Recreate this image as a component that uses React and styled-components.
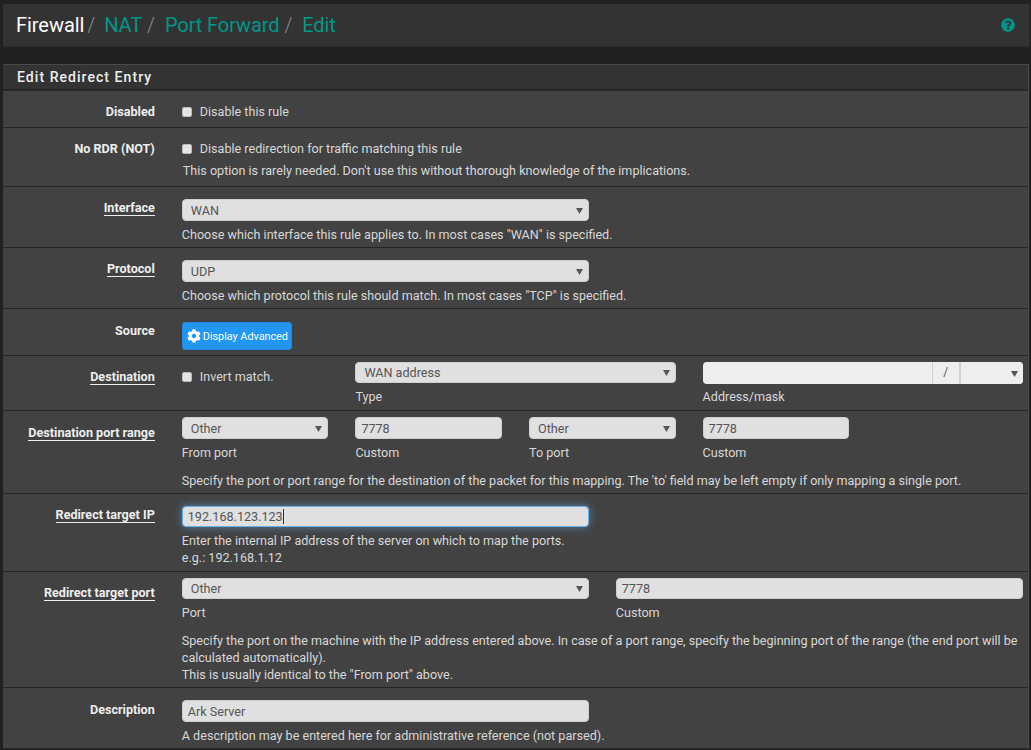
import React from "react";
import styled, { createGlobalStyle } from "styled-components";
import { FaCog, FaQuestionCircle } from "react-icons/fa";

const arrow = `url("data:image/svg+xml,%3Csvg xmlns='http://www.w3.org/2000/svg' width='7' height='7'%3E%3Cpath d='M0 1h7L3.5 7z' fill='%23555'/%3E%3C/svg%3E")`;

const Global = createGlobalStyle`
  html, body { margin: 0; padding: 0; background: #212121; height: 100%; overflow: hidden; }
  body { font-family: Roboto, "Liberation Sans", sans-serif; font-size: 12.59px; line-height: 17px; color: #d8d8d8; }
  * { box-sizing: border-box; }
`;
const Page = styled.div`padding: 4px 2px 0 3px; width: 1031px;`;
const Bar = styled.header`
  height: 42px; background: #333; display: flex; align-items: center; justify-content: space-between;
  padding: 0 14px 0 13px; box-shadow: 1px 1px 0 #2a2a2a;
`;
const Crumbs = styled.ol`display: flex; margin: 0; padding: 0; list-style: none; font-size: 20px; line-height: 24px; font-weight: 300;`;
const Crumb = styled.li`
  color: ${p => (p.$root ? "#fff" : "#009688")}; font-weight: 400; letter-spacing: ${p => (p.$root ? "-0.05px" : "-0.1px")};
  &:not(:first-child)::before {
    content: "/"; color: #8c8c8c; font-weight: 300;
    padding: ${p => (p.$tight ? "0 9px 0 3px" : "0 10px 0 5px")};
  }
`;
const Help = styled.span`display: flex; color: #009688; font-size: 14px;`;
const Panel = styled.section`
  margin-top: 18px; background: #424242; border: 1px solid #4a4a4a; border-bottom: 0; border-left: 0; width: 1026px;
`;
const Heading = styled.h2`
  margin: 0; height: 26px; background: #333; border-bottom: 2px solid #262626; color: #eee; font-size: 14px; font-weight: 500;
  letter-spacing: 1.05px; line-height: 24px; padding-left: 14px;
`;
const Row = styled.div`
  display: grid; grid-template-columns: 151.8px 1fr; column-gap: 27px; padding: ${p => p.$top}px 5.2px 0 0;
  height: ${p => p.$h}px; border-bottom: 1px solid #262626; overflow: hidden;
`;
const Label = styled.span`
  text-align: right; font-weight: 700; font-size: 12.6px; color: #eee; line-height: 17px;
  margin-top: ${p => p.$off || 0}px;
  justify-self: end;
  height: max-content;
  ${p => p.$u && "border-bottom: 1px solid #eee; line-height: 15px;"}
`;
const Body = styled.div`min-width: 0;`;
const Cols = styled.div`display: grid; grid-template-columns: repeat(10, 1fr); column-gap: 27px;`;
const Col = styled.div`grid-column: span ${p => p.$span}; min-width: 0;`;
const CheckLine = styled.label`display: flex; align-items: center; gap: 8px; height: 17px; margin-top: ${p => p.$off || 0}px;`;
const Check = styled.input.attrs({ type: "checkbox" })`
  appearance: none; width: 10px; height: 10px; margin: 0; background: #e4e4e4; border-radius: 2px; border: 1px solid #bdbdbd;
`;
const Field = styled.input`
  display: block; width: 100%; height: ${p => p.$h || 22}px; background: #e0e0e0; border: 1px solid #cfcfcf; border-radius: 4px;
  color: #555; font: 12.6px Roboto, sans-serif; padding: 0 5px; outline: none;
  ${p => p.$focus && "border-color: #66afe9; box-shadow: 0 0 8px rgba(102,175,233,.6);"}
`;
const Select = styled.select`
  appearance: none; display: block; width: 100%; height: ${p => p.$h || 22}px; background: #e0e0e0 ${arrow} no-repeat right 5px center; border: 1px solid #cfcfcf; border-radius: 4px;
  color: #555; font: 12.6px Roboto, sans-serif; padding: 0 8px; outline: none;
`;
const Sub = styled.div`margin-top: ${p => p.$top ?? 5}px; line-height: 17px;`;
const Help2 = styled.div`margin-top: ${p => p.$top ?? 5}px; line-height: 17px; margin-left: ${p => p.$in || 0}px;`;
const Button = styled.button`
  display: flex; align-items: center; gap: 2px; height: 28px; padding: 0 3px 0 4px; background: #2196f3; border: 1px solid #1e88e5;
  border-radius: 3px; color: #fff; font: 10.8px Roboto, sans-serif;
`;
const AddrGroup = styled.div`display: flex; height: 22px; background: #eee; border-radius: 4px; overflow: hidden;`;
const AddrInput = styled.input`flex: 1; min-width: 0; border: 0; background: transparent; outline: none;`;
const Slash = styled.span`width: 29px; text-align: center; line-height: 21px; color: #555; border-left: 1px solid #d0d0d0; border-right: 2px solid #d0d0d0; font-size: 12px;`;
const Mask = styled.select`appearance: none; width: 62px; border: 0; height: 22px; background: #eee ${arrow} no-repeat right 5px center; outline: none;`;
const CaretWrap = styled.div`position: relative;`;
const Caret = styled.span`position: absolute; left: 101px; top: 3px; width: 1px; height: 15px; background: #333;`;

const Opt = ({ v, h }) => <Select $h={h} defaultValue={v}><option>{v}</option></Select>;

export default function App() {
  return (
    <Page>
      <Global />
      <Bar>
        <Crumbs>
          <Crumb $root>Firewall</Crumb><Crumb $tight>NAT</Crumb><Crumb>Port Forward</Crumb><Crumb>Edit</Crumb>
        </Crumbs>
        <Help><FaQuestionCircle /></Help>
      </Bar>
      <Panel>
        <Heading>Edit Redirect Entry</Heading>
        <Row $h={37} $top={12}>
          <Label>Disabled</Label>
          <Body><CheckLine><Check />Disable this rule</CheckLine></Body>
        </Row>
        <Row $h={59} $top={12}>
          <Label>No RDR (NOT)</Label>
          <Body>
            <CheckLine><Check />Disable redirection for traffic matching this rule</CheckLine>
            <Help2 $in={1}>This option is rarely needed. Don't use this without thorough knowledge of the implications.</Help2>
          </Body>
        </Row>
        <Row $h={61} $top={12}>
          <Label $u $off={1}>Interface</Label>
          <Body>
            <Cols><Col $span={5}><Opt v="WAN" /></Col></Cols>
            <Help2>Choose which interface this rule applies to. In most cases "WAN" is specified.</Help2>
          </Body>
        </Row>
        <Row $h={61} $top={12}>
          <Label $u $off={1}>Protocol</Label>
          <Body>
            <Cols><Col $span={5}><Opt v="UDP" /></Col></Cols>
            <Help2>Choose which protocol this rule should match. In most cases "TCP" is specified.</Help2>
          </Body>
        </Row>
        <Row $h={47} $top={13}>
          <Label>Source</Label>
          <Body><Button><FaCog size={14} />Display Advanced</Button></Body>
        </Row>
        <Row $h={55} $top={6}>
          <Label $u $off={7}>Destination</Label>
          <Body>
            <Cols>
              <Col $span={2}><CheckLine $off={6}><Check />Invert match.</CheckLine></Col>
              <Col $span={4}><Opt v="WAN address" h={21} /><Sub $top={5}>Type</Sub></Col>
              <Col $span={4}>
                <AddrGroup><AddrInput /><Slash>/</Slash><Mask><option></option></Mask></AddrGroup>
                <Sub $top={4}>Address/mask</Sub>
              </Col>
            </Cols>
          </Body>
        </Row>
        <Row $h={83} $top={6}>
          <Label $u $off={8}>Destination port range</Label>
          <Body>
            <Cols>
              <Col $span={2}><Opt v="Other" /><Sub>From port</Sub></Col>
              <Col $span={2}><Field defaultValue="7778" /><Sub>Custom</Sub></Col>
              <Col $span={2}><Opt v="Other" /><Sub>To port</Sub></Col>
              <Col $span={2}><Field defaultValue="7778" /><Sub>Custom</Sub></Col>
            </Cols>
            <Help2 $top={11}>Specify the port or port range for the destination of the packet for this mapping. The 'to' field may be left empty if only mapping a single port.</Help2>
          </Body>
        </Row>
        <Row $h={78} $top={12}>
          <Label $u $off={1}>Redirect target IP</Label>
          <Body>
            <Cols><Col $span={5}><CaretWrap><Field $h={21} $focus defaultValue="192.168.123.123" /><Caret /></CaretWrap></Col></Cols>
            <Help2>Enter the internal IP address of the server on which to map the ports.<br />e.g.: 192.168.1.12</Help2>
          </Body>
        </Row>
        <Row $h={116} $top={6}>
          <Label $u $off={7}>Redirect target port</Label>
          <Body>
            <Cols>
              <Col $span={5}><Opt v="Other" h={21} /><Sub>Port</Sub></Col>
              <Col $span={5}><Field $h={21} defaultValue="7778" /><Sub>Custom</Sub></Col>
            </Cols>
            <Help2 $top={11}>Specify the port on the machine with the IP address entered above. In case of a port range, specify the beginning port of the range (the end port will be calculated automatically).<br />This is usually identical to the "From port" above.</Help2>
          </Body>
        </Row>
        <Row $h={61} $top={12}>
          <Label $off={1}>Description</Label>
          <Body>
            <Cols><Col $span={5}><Field defaultValue="Ark Server" /></Col></Cols>
            <Help2>A description may be entered here for administrative reference (not parsed).</Help2>
          </Body>
        </Row>
      </Panel>
    </Page>
  );
}
